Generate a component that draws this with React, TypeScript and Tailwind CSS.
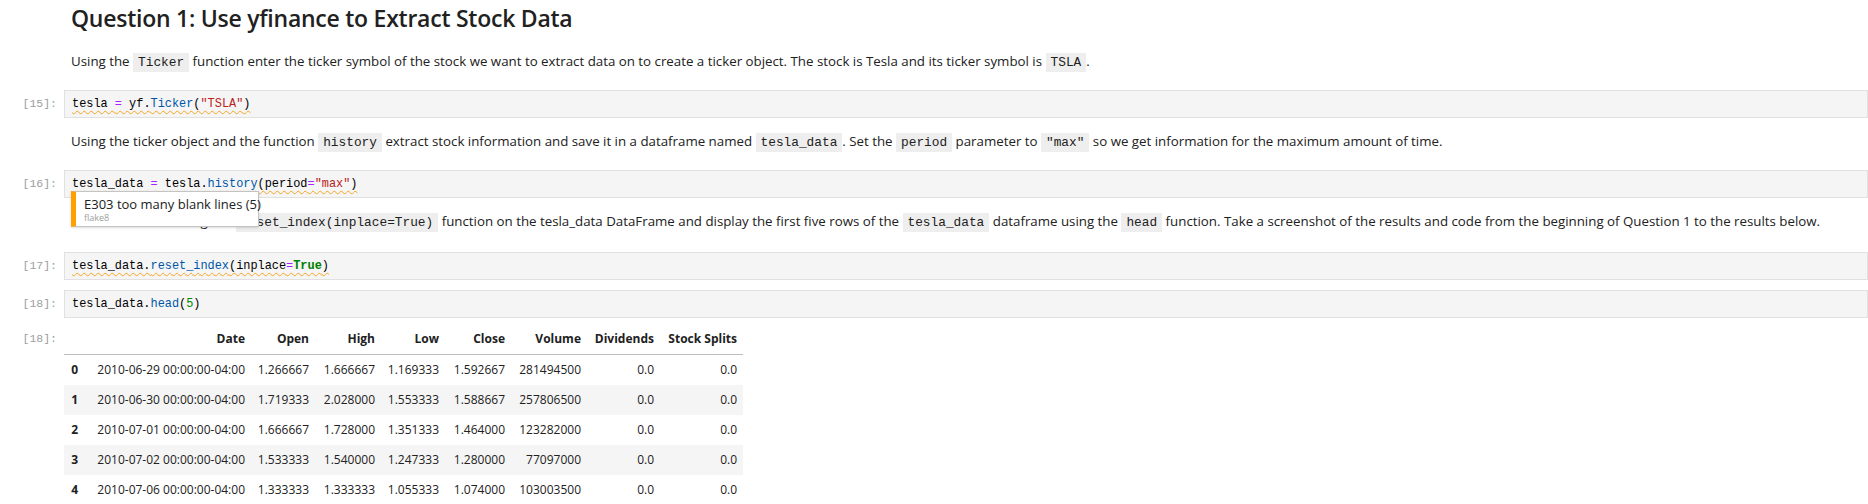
import React from 'react';

const Chip = ({ children }: { children: React.ReactNode }) => (
  <span className="inline-block bg-[#eeeeee] px-[5px] py-[1px] font-['Liberation_Mono',monospace] text-[12.8px] leading-[17px] align-baseline">
    {children}
  </span>
);

const Op = ({ children }: { children: React.ReactNode }) => <span className="text-[#aa22ff]">{children}</span>;
const Prop = ({ children }: { children: React.ReactNode }) => <span className="text-[#0055aa]">{children}</span>;
const Str = ({ children }: { children: React.ReactNode }) => <span className="text-[#ba2121]">{children}</span>;
const Kw = ({ children }: { children: React.ReactNode }) => <span className="text-[#008000] font-bold">{children}</span>;
const Num = ({ children }: { children: React.ReactNode }) => <span className="text-[#008800]">{children}</span>;

const Wavy = ({ children }: { children: React.ReactNode }) => (
  <span className="underline decoration-wavy decoration-[#f5a623] decoration-1 underline-offset-[3px]">{children}</span>
);

const CodeCell = ({ n, children, extra }: { n: number; children: React.ReactNode; extra?: React.ReactNode }) => (
  <div className="flex h-[38px] py-[5px]">
    <div className="w-[64px] shrink-0 pr-[7px] text-right font-['Liberation_Mono',monospace] text-[11.5px] leading-[28px] text-[#9e9e9e]">
      [{n}]:
    </div>
    <div className="relative flex-1 h-[28px] border border-[#e0e0e0] bg-[#f5f5f5] pl-[7px] font-['Liberation_Mono',monospace] text-[11.9px] leading-[26px] text-black whitespace-pre">
      {children}
      {extra}
    </div>
  </div>
);

const rows = [
  ['0', '2010-06-29 00:00:00-04:00', '1.266667', '1.666667', '1.169333', '1.592667', '281494500', '0.0', '0.0'],
  ['1', '2010-06-30 00:00:00-04:00', '1.719333', '2.028000', '1.553333', '1.588667', '257806500', '0.0', '0.0'],
  ['2', '2010-07-01 00:00:00-04:00', '1.666667', '1.728000', '1.351333', '1.464000', '123282000', '0.0', '0.0'],
  ['3', '2010-07-02 00:00:00-04:00', '1.533333', '1.540000', '1.247333', '1.280000', '77097000', '0.0', '0.0'],
  ['4', '2010-07-06 00:00:00-04:00', '1.333333', '1.333333', '1.055333', '1.074000', '103003500', '0.0', '0.0'],
];

const headers = ['', 'Date', 'Open', 'High', 'Low', 'Close', 'Volume', 'Dividends', 'Stock Splits'];

export default function App() {
  return (
    <div className="w-[1868px] h-[504px] overflow-hidden bg-white text-[#212121] font-['Open_Sans',sans-serif]">
      {/* title + first paragraph */}
      <div className="flex h-[85px]">
        <div className="w-[64px] shrink-0" />
        <div className="flex-1 pl-[7px]">
          <h2 className="pt-[3px] text-[23px] leading-[30px] font-semibold tracking-[-0.25px]">Question 1: Use yfinance to Extract Stock Data</h2>
          <p className="mt-[18px] text-[13.3px] leading-[20px] whitespace-nowrap">
            Using the <Chip>Ticker</Chip> function enter the ticker symbol of the stock we want to extract data on to create a ticker object. The stock is Tesla and its ticker symbol is <Chip>TSLA</Chip>.
          </p>
        </div>
      </div>

      <CodeCell n={15}>
        <Wavy>tesla <Op>=</Op> yf.<Prop>Ticker</Prop>(<Str>"TSLA"</Str>)</Wavy>
      </CodeCell>

      <div className="flex h-[42px] pt-[8px]">
        <div className="w-[64px] shrink-0" />
        <p className="flex-1 pl-[7px] text-[13.3px] leading-[20px] whitespace-nowrap">
          Using the ticker object and the function <Chip>history</Chip> extract stock information and save it in a dataframe named <Chip>tesla_data</Chip>. Set the <Chip>period</Chip> parameter to <Chip>"max"</Chip> so we get information for the maximum amount of time.
        </p>
      </div>

      <CodeCell
        n={16}
        extra={
          <div className="absolute left-[6px] top-[20px] z-10 w-[188px] h-[36px] bg-white border border-[#c4c4c4] border-l-[5px] border-l-[#ffa000] pl-[8px] font-['Open_Sans',sans-serif] shadow-sm">
            <div className="pt-[4px] text-[13px] leading-[16px] text-[#212121]">E303 too many blank lines (5)</div>
            <div className="text-[9px] leading-[11px] text-[#9e9e9e]">flake8</div>
          </div>
        }
      >
        <Wavy>tesla_data <Op>=</Op> tesla.<Prop>history</Prop>(period<Op>=</Op><Str>"max"</Str>)</Wavy>
      </CodeCell>

      <div className="flex h-[44px] pt-[8px]">
        <div className="w-[64px] shrink-0" />
        <p className="flex-1 pl-[7px] text-[13.3px] leading-[20px] whitespace-nowrap">
          <span className="tracking-[0.22px]">Reset the index using the </span><Chip>reset_index(inplace=True)</Chip> function on the tesla_data DataFrame and display the first five rows of the <Chip>tesla_data</Chip> dataframe using the <Chip>head</Chip> function. Take a screenshot of the results and code from the beginning of Question 1 to the results below.
        </p>
      </div>

      <CodeCell n={17}>
        <Wavy>tesla_data.<Prop>reset_index</Prop>(inplace<Op>=</Op><Kw>True</Kw>)</Wavy>
      </CodeCell>

      <CodeCell n={18}>
        tesla_data.<Prop>head</Prop>(<Num>5</Num>)
      </CodeCell>

      {/* output */}
      <div className="flex">
        <div className="w-[64px] shrink-0 mt-[1px] pr-[7px] text-right font-['Liberation_Mono',monospace] text-[11.5px] leading-[30px] text-[#9e9e9e]">
          [18]:
        </div>
        <div className="mt-[1px] w-[679px] text-[12px]">
          <div className="grid grid-cols-[21px_166px_64px_66px_64px_66px_76px_73px_83px] h-[31px] items-center border-b border-[#bdbdbd] font-bold">
            {headers.map((h, i) => (
              <div key={i} className="text-right pr-[6px] whitespace-nowrap">{h}</div>
            ))}
          </div>
          {rows.map((r, ri) => (
            <div
              key={ri}
              className={
                ri % 2 === 1
                  ? 'grid grid-cols-[21px_166px_64px_66px_64px_66px_76px_73px_83px] h-[30px] items-center bg-[#f5f5f5]'
                  : 'grid grid-cols-[21px_166px_64px_66px_64px_66px_76px_73px_83px] h-[30px] items-center'
              }
            >
              {r.map((c, ci) => (
                <div key={ci} className={ci === 0 ? 'text-right pr-[7px] font-bold' : 'text-right pr-[6px] whitespace-nowrap'}>
                  {c}
                </div>
              ))}
            </div>
          ))}
        </div>
      </div>
    </div>
  );
}
